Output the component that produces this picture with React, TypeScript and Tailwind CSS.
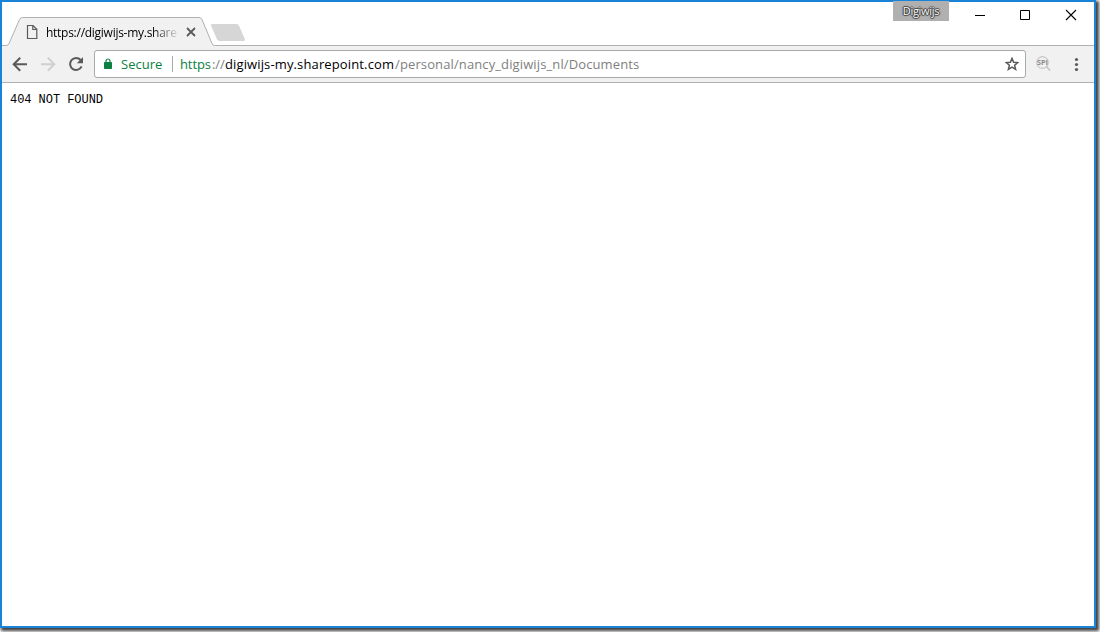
import React from "react";

type tUrlPart = {
    key: string;
    text: string;
    style: string;
};

const urlParts: tUrlPart[] = [
    { key: "scheme", text: "https", style: "w-[32px] text-[#0b8043] tracking-[-0.1px]" },
    { key: "slashes", text: "://", style: "w-[13px] text-[#808080] tracking-[-0.1px]" },
    { key: "host", text: "digiwijs-my.sharepoint.com", style: "w-[170px] text-black tracking-[0.13px]" },
    { key: "path", text: "/personal/nancy_digiwijs_nl/Documents", style: "text-[#808080] tracking-[0.12px]" },
];

const TitleBar: React.FC = () => {
    return (
        <div className="relative flex h-11 shrink-0 items-start justify-between bg-white">
            <svg className="absolute left-0 top-0" width="1092" height="44" viewBox="2 2 1092 44" fill="none">
                <path d="M2 45.5H6.5Q8.3 45.5 9 43.5L19.5 19.5Q20.6 17.5 22.5 17.5H199Q201 17.5 202 19.5L212 43.5Q212.8 45.5 214.5 45.5H1094V46H2Z" fill="#f1f1f1" />
                <path d="M2 45.5H6.5Q8.3 45.5 9 43.5L19.5 19.5Q20.6 17.5 22.5 17.5H199Q201 17.5 202 19.5L212 43.5Q212.8 45.5 214.5 45.5H1094" stroke="#b0b0b0" />
                <path d="M212.5 24H236.5Q238.2 24 239 25.8L244.8 39Q245.5 41 243.7 41H219.5Q217.8 41 217 39.2L211 25.5Q210.4 24 212.5 24Z" fill="#d6d6d6" />
            </svg>
            <div className="relative flex items-center pl-[24px] pt-[21px]">
                <svg width="12" height="16" viewBox="0 0 12 16" fill="none" stroke="#5a5a5a" strokeWidth="1.2">
                    <path d="M1.5 1.5H7L10.8 5.3V14.5H1.5Z" />
                    <path d="M6.8 1.5V5.5H10.8" />
                </svg>
                <div className="ml-2 h-[18px] w-[132px] overflow-hidden whitespace-nowrap text-[12px] leading-[20px] tracking-[-0.27px] text-black [mask-image:linear-gradient(to_right,black_106px,transparent_134px)]">
                    https://digiwijs-my.share
                </div>
                <svg className="ml-2" width="10" height="10" viewBox="0 0 10 10" stroke="#5a5a5a" strokeWidth="1.8">
                    <path d="M1 1L9 9M9 1L1 9" />
                </svg>
            </div>
            <div className="relative flex">
                <div className="mt-[-1px] h-5 w-[56px] bg-[#b0b0b0] text-center text-[11px] leading-[20px] tracking-[-0.3px] text-white [text-shadow:0_0_1px_#222,1px_0_1px_#444,-1px_0_1px_#444,0_1px_1px_#444,0_-1px_1px_#444]">
                    Digiwijs
                </div>
                <svg width="145" height="28" viewBox="949 2 145 28" fill="none" stroke="black">
                    <path d="M975 15.5H985" />
                    <path d="M1020.5 10.5H1029.5V19.5H1020.5Z" />
                    <path d="M1066 10L1076 20M1076 10L1066 20" strokeWidth="1.1" />
                </svg>
            </div>
        </div>
    );
};

const Toolbar: React.FC = () => {
    return (
        <div className="flex h-[37px] shrink-0 items-start border-b border-[#b0b0b0] bg-[#f1f1f1]">
            <svg width="92" height="36" viewBox="2 46 92 36" fill="none" stroke="#5a5a5a" strokeWidth="2">
                <path d="M27 64.2H14M20.2 57.7L13.7 64.2L20.2 70.7" />
                <path d="M41 64.2H54M47.8 57.7L54.3 64.2L47.8 70.7" stroke="#d0d0d0" />
                <path d="M80.6 60A6 6 0 1 0 81.6 66.3" />
                <path d="M83 57V63.2H76.8Z" fill="#5a5a5a" stroke="none" />
            </svg>
            <div className="mt-1 flex h-[28px] w-[932px] items-center rounded-[3px] border border-[#a9a9a9] bg-white">
                <svg className="mb-px ml-[9px]" width="8" height="11" viewBox="0 0 8 11">
                    <path d="M2 5V3A2 2 0 0 1 6 3V5" fill="none" stroke="#0b8043" strokeWidth="1.2" />
                    <rect y="4" width="8" height="7" rx="0.8" fill="#0b8043" />
                </svg>
                <div className="ml-[9px] w-[51px] text-[13px] leading-[18px] text-[#0b8043]">Secure</div>
                <div className="h-4 w-px bg-[#a9a9a9]" />
                <div className="ml-[7px] flex grow whitespace-nowrap text-[13px] leading-[18px]">
                    {urlParts.map((item) => (
                        <span key={item.key} className={item.style}>
                            {item.text}
                        </span>
                    ))}
                </div>
                <svg className="mr-[6px]" width="14" height="14" viewBox="0 0 14 14" fill="none" stroke="#5a5a5a" strokeWidth="1.5">
                    <path d="M7 1.4L8.6 5.2L12.8 5.6L9.6 8.3L10.6 12.4L7 10.2L3.4 12.4L4.4 8.3L1.2 5.6L5.4 5.2Z" />
                </svg>
            </div>
            <svg width="68" height="36" viewBox="1026 46 68 36" fill="none">
                <circle cx="1042.5" cy="62.5" r="5.8" stroke="#c8c8c8" strokeWidth="1.2" />
                <path d="M1046.5 66.5L1050 70.5" stroke="#c4c4c4" strokeWidth="1.6" />
                <text x="1037" y="65.3" fontSize="7.5" fontWeight="700" fill="#8c8c8c" textLength="11" lengthAdjust="spacingAndGlyphs">
                    SPI
                </text>
                <g fill="#5a5a5a">
                    <circle cx="1076.5" cy="59.5" r="1.6" />
                    <circle cx="1076.5" cy="64.5" r="1.6" />
                    <circle cx="1076.5" cy="69.5" r="1.6" />
                </g>
            </svg>
        </div>
    );
};

const App: React.FC = () => {
    return (
        <div className="h-[632px] w-[1100px] overflow-hidden bg-white font-['Open_Sans','Noto_Sans',sans-serif]">
            <div className="flex h-[628px] w-[1096px] flex-col border-2 border-[#1883d7] bg-white shadow-[2px_2px_3px_1px_rgba(0,0,0,0.75)]">
                <TitleBar />
                <Toolbar />
                <pre className="m-0 grow px-2 pt-[9px] font-['Liberation_Mono',monospace] text-[12px] leading-[16px] tracking-[-0.05px] text-black">
                    404 NOT FOUND
                </pre>
            </div>
        </div>
    );
};
export default App;
